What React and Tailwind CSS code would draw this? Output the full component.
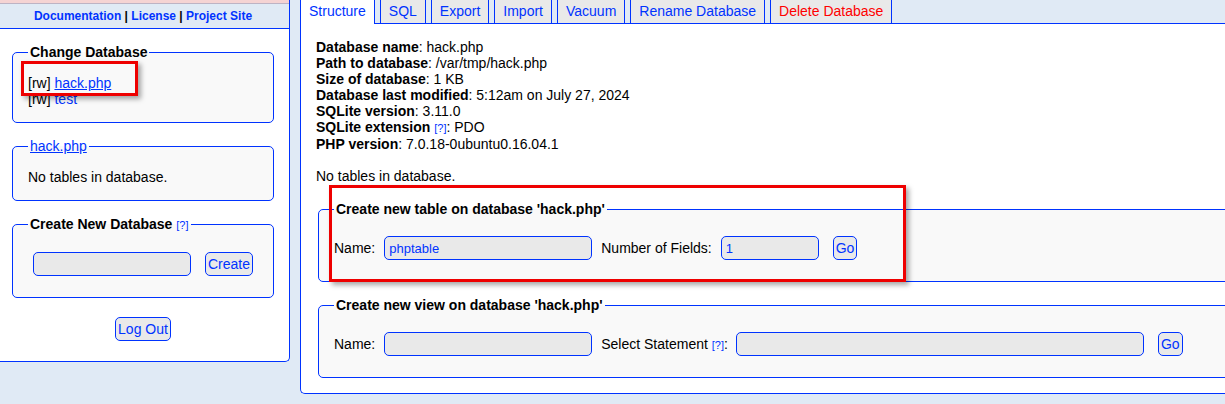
const BLUE = 'border-[#03f]';

function Help() {
  return <span className="cursor-pointer text-[11px] font-normal text-[#03f]">[?]</span>;
}

function Field({ legend, children, className = '' }) {
  return (
    <fieldset className={`rounded-[5px] border ${BLUE} bg-[#f9f9f9] px-[15px] pb-[15px] pt-[15px] ${className}`}>
      <legend className="px-[2px] font-bold">{legend}</legend>
      {children}
    </fieldset>
  );
}

function Btn({ children, className = '' }) {
  return (
    <button className={`h-[24px] rounded-[5px] border border-[#03f] bg-[#e9e9e9] px-[2px] text-[14px] leading-4 text-[#03f] ${className}`}>
      {children}
    </button>
  );
}

function TextInput({ value = '', className = '' }) {
  return (
    <input
      readOnly
      value={value}
      className={`h-[24px] rounded-[5px] border border-[#03f] bg-[#e9e9e9] px-[4px] text-[13px] text-[#03f] outline-none ${className}`}
    />
  );
}

const TABS = ['Structure', 'SQL', 'Export', 'Import', 'Vacuum', 'Rename Database', 'Delete Database'];

const INFO = [
  ['Database name', 'hack.php'],
  ['Path to database', '/var/tmp/hack.php'],
  ['Size of database', '1 KB'],
  ['Database last modified', '5:12am on July 27, 2024'],
  ['SQLite version', '3.11.0'],
  ['SQLite extension', 'PDO', true],
  ['PHP version', '7.0.18-0ubuntu0.16.04.1'],
];

export default function App() {
  return (
    <div className="relative h-[404px] w-full overflow-hidden bg-[#e0eaf5] font-['Liberation_Sans',Arial,sans-serif] text-[14px] leading-4 text-black">
      <div className="flex w-[1260px] items-start">
        {/* left sidebar */}
        <div className="-ml-[4px] w-[294px] shrink-0 rounded-br-[5px] border-x border-b border-[#03f] bg-white">
          <div className="h-[3px] bg-[#f5d3d3]" />
          <div className="flex h-[26px] items-center justify-center border-y border-t-[#bdb3c4] border-b-[#03f] bg-[#e0eaf5] text-[12px] font-bold">
            <a className="text-[#03f]">Documentation</a>
            <span>&nbsp;|&nbsp;</span>
            <a className="text-[#03f]">License</a>
            <span>&nbsp;|&nbsp;</span>
            <a className="text-[#03f]">Project Site</a>
          </div>
          <div className="px-[15px] pb-[20px] pt-[15px]">
            <Field legend="Change Database" className="mb-[15px]">
              <div>[rw] <a className="text-[#03f] underline">hack.php</a></div>
              <div>[rw] <a className="text-[#03f]">test</a></div>
            </Field>
            <fieldset className={`mb-[15px] rounded-[5px] border ${BLUE} bg-[#f9f9f9] px-[15px] pb-[15px] pt-[15px]`}>
              <legend className="px-[2px]">
                <a className="text-[#03f] underline">hack.php</a>
              </legend>
              <div>No tables in database.</div>
            </fieldset>
            <Field legend={<>Create New Database <Help /></>} className="mb-[20px]">
              <div className="flex h-[34px] items-center pb-[2px]">
                <TextInput className="ml-[5px] w-[158px]" />
                <Btn className="ml-[14px]">Create</Btn>
              </div>
            </Field>
            <div className="flex justify-center">
              <Btn className="-mt-px">Log Out</Btn>
            </div>
          </div>
        </div>

        {/* main panel */}
        <div className="ml-[10px] flex-1">
          <div className="flex items-start gap-[5px] border-b border-[#03f]">
            {TABS.map((t, i) => (
              <div
                key={t}
                className={`flex items-center border-x border-[#03f] px-2 ${
                  i === 0 ? '-mb-px h-[24px] bg-white pb-[2px]' : 'h-[23px] bg-[#e9e9e9] pb-px'
                } ${t === 'Delete Database' ? 'text-[#f00]' : 'text-[#03f]'}`}
              >
                {t}
              </div>
            ))}
          </div>
          <div className="rounded-bl-[5px] border-b border-l border-[#03f] bg-white p-[15px]">
            {INFO.map(([k, v, help]) => (
              <div key={k}>
                <b>{k}</b>
                {help && <> <Help /></>}: {v}
              </div>
            ))}
            <div className="h-4" />
            <div>No tables in database.</div>

            <Field legend="Create new table on database 'hack.php'" className="mb-[15px] ml-[2px] mt-[17px]">
              <div className="flex h-[34px] items-center whitespace-nowrap pb-[2px]">
                <span>Name:</span>
                <TextInput value="phptable" className="ml-[9px] w-[208px]" />
                <span className="ml-[9px]">Number of Fields:</span>
                <TextInput value="1" className="ml-[9px] w-[98px]" />
                <Btn className="ml-[14px]">Go</Btn>
              </div>
            </Field>

            <Field legend="Create new view on database 'hack.php'" className="ml-[2px]">
              <div className="flex h-[34px] items-center whitespace-nowrap pb-[2px]">
                <span>Name:</span>
                <TextInput className="ml-[9px] w-[208px]" />
                <span className="ml-[9px]">
                  Select Statement <Help />:
                </span>
                <TextInput className="ml-[8px] w-[408px]" />
                <Btn className="ml-[14px]">Go</Btn>
              </div>
            </Field>
          </div>
        </div>
      </div>

      {/* annotation boxes */}
      <div className="pointer-events-none absolute left-[21px] top-[61px] h-[35px] w-[117px] border-[3px] border-[#ee0000] shadow-[3px_3px_5px_rgba(0,0,0,0.35)]" />
      <div className="pointer-events-none absolute left-[329px] top-[185px] h-[97px] w-[577px] border-[3px] border-[#ee0000] shadow-[3px_3px_5px_rgba(0,0,0,0.35)]" />
    </div>
  );
}
